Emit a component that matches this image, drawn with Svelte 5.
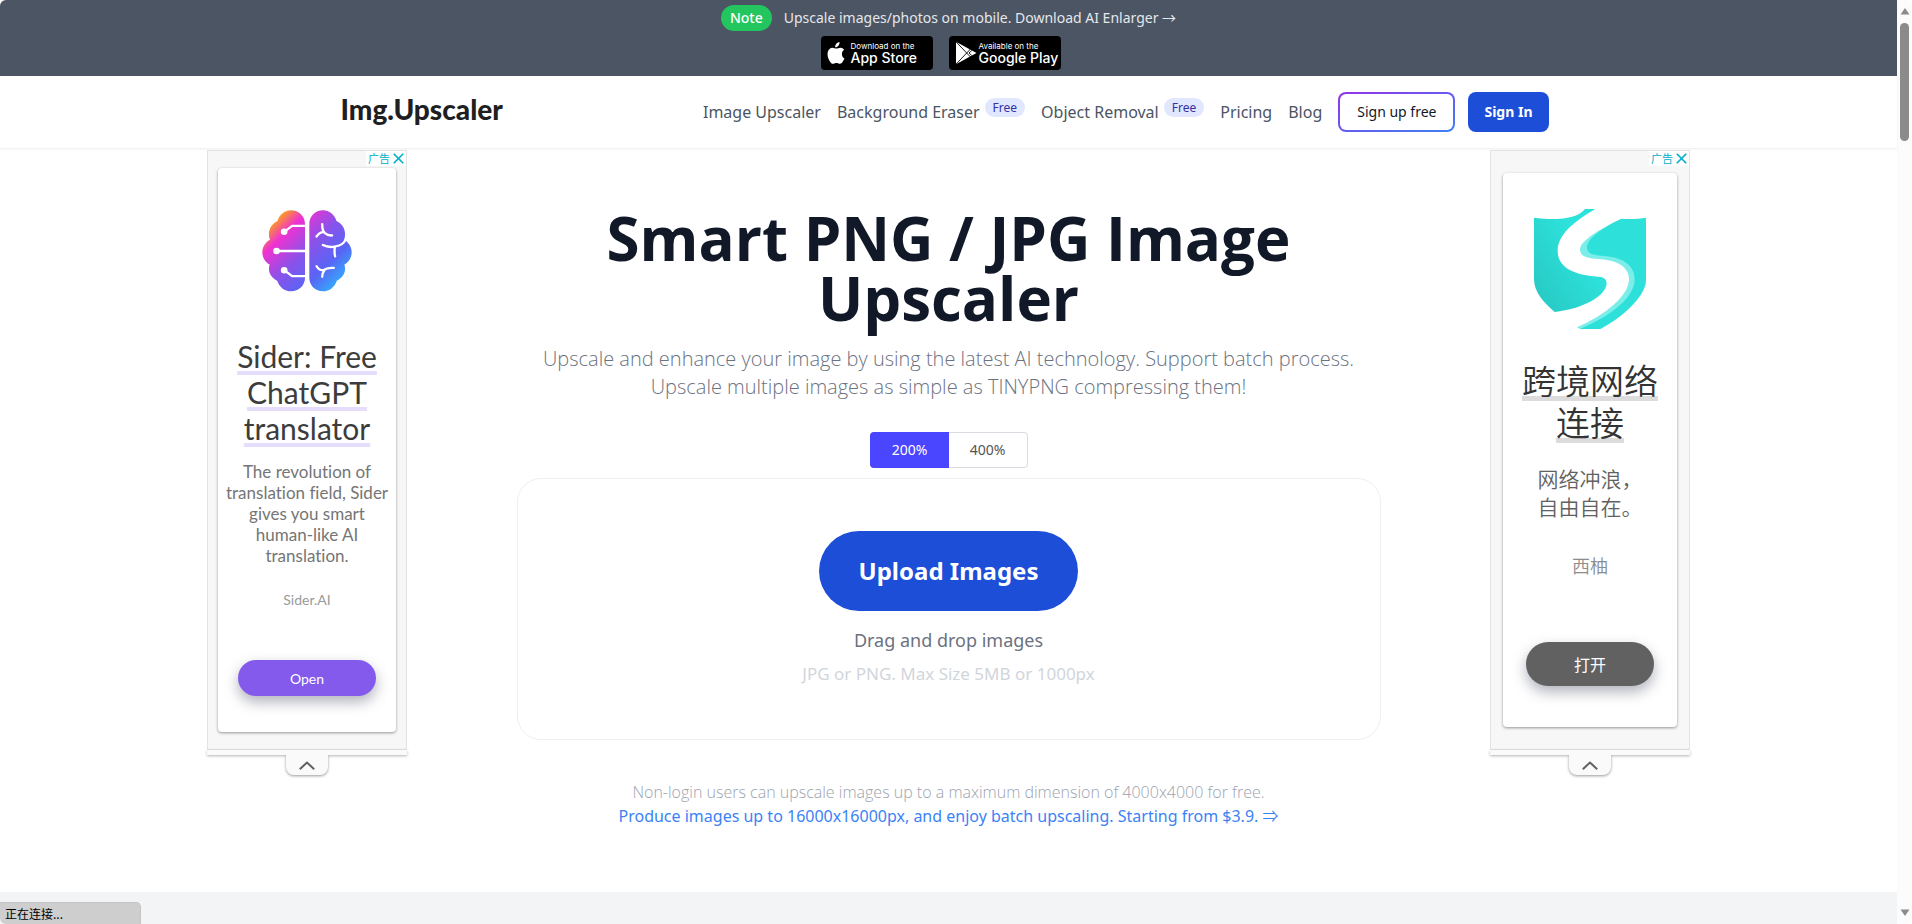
<script>
  let scale = $state('200%');
  const scales = ['200%', '400%'];
  const links = [
    { label: 'Image Upscaler' },
    { label: 'Background Eraser', tag: 'Free' },
    { label: 'Object Removal', tag: 'Free' },
    { label: 'Pricing' },
    { label: 'Blog' }
  ];
</script>

{#snippet adChoices()}
  <div class="choices">
    <a href="#ad">广告</a>
    <button aria-label="Close ad">
      <svg viewBox="0 0 10 10" width="11" height="11"><path d="M.7.7l8.600 8.600M9.300.7L.7 9.300" stroke="#00aecd" stroke-width="1.5" /></svg>
    </button>
  </div>
{/snippet}

{#snippet adTail()}
  <div class="tail"></div>
  <button class="tab" aria-label="Collapse ad">
    <svg viewBox="0 0 16 9" width="16" height="9"><path d="M.8 8.200L8 1.500l7.200 6.700" fill="none" stroke="#616161" stroke-width="2" /></svg>
  </button>
{/snippet}

<div class="window">
  <div class="page">
    <div class="banner">
      <p><span class="note">Note</span><a href="#app">Upscale images/photos on mobile. Download AI Enlarger →</a></p>
      <div class="stores">
        <a class="store" href="#ios">
          <svg viewBox="0 0 18 22" width="18" height="22" fill="#fff">
            <path d="M12.500 0c.2 1.600-.5 3-1.400 4C10.300 4.900 9.200 5.400 8.200 5.300 8 3.900 8.700 2.500 9.500 1.600 10.300.7 11.600.1 12.500 0z" />
            <path d="M17.500 16.500c-.5 1.200-1 2-1.700 3-.9 1.300-1.700 2.300-2.900 2.300-1.300 0-1.700-.8-3.500-.8s-2.200.8-3.500.8c-1.100 0-2-1-3-2.400C.7 16.400.1 12.600.8 10c.6-2.500 2.500-4.300 4.700-4.300 1.500 0 2.500.9 3.900.9 1.300 0 2.100-.9 4-.9 1.400 0 2.900.8 3.800 2-3.300 2-2.900 6.900.3 8.800z" />
          </svg>
          <span><small>Download on the</small><b>App Store</b></span>
        </a>
        <a class="store" href="#android">
          <svg viewBox="0 0 22 24" width="22" height="24">
            <path d="M1 .8L21.500 12 1 23.200z" fill="#fff" />
            <path d="M1 .8L15.500 16M1 23.200L15.500 8M16.800 9.500L14 12l2.800 2.500" fill="none" stroke="#000" stroke-width=".9" />
          </svg>
          <span><small>Available on the</small><b>Google Play</b></span>
        </a>
      </div>
    </div>

    <header>
      <div class="bar">
        <a class="logo" href="#home">Img.Upscaler</a>
        <nav>
          {#each links as link}
            <a href="#{link.label}">{link.label}{#if link.tag}<span class="tag">{link.tag}</span>{/if}</a>
          {/each}
          <button class="signup">Sign up free</button>
          <button class="signin">Sign In</button>
        </nav>
      </div>
    </header>

    <div class="body">
      <aside class="sider">
        <div class="ad">
          {@render adChoices()}
          <div class="card">
            <svg class="brain" viewBox="215 210 272 246" width="90" height="82">
              <defs>
                <linearGradient id="mind" gradientUnits="userSpaceOnUse" x1="240" y1="225" x2="450" y2="440">
                  <stop offset=".05" stop-color="#ffa80a" />
                  <stop offset=".23" stop-color="#f032d0" />
                  <stop offset=".5" stop-color="#8a52ea" />
                  <stop offset=".76" stop-color="#5865f5" />
                  <stop offset="1" stop-color="#2fb4ff" />
                </linearGradient>
              </defs>
              <g fill="url(#mind)">
                <path d="M345 252C345 228 326 210 303 210C283 210 268 223 262 242C246 249 236 264 236 282C236 288 237 294 239 299C225 307 216 321 216 337C216 353 225 367 238 374C237 378 236 382 236 387C236 403 246 416 261 423C267 442 283 455 303 455C326 455 345 437 345 414Z" />
                <path d="M358 252C358 228 376 210 399 210C419 210 434 223 440 242C456 249 466 264 466 282C466 288 465 294 463 299C477 307 486 321 486 337C486 353 477 367 464 374C465 378 466 382 466 387C466 403 456 416 441 423C435 442 419 455 399 455C376 455 358 437 358 414Z" />
              </g>
              <g fill="none" stroke="#fff" stroke-width="7" stroke-linecap="round">
                <path d="M282 275l24-18h42M259 333h89M282 391l24 18h42" />
                <path d="M397 252q0 20 8 27 9 8 22 7M380 289q10-15 23-13M399 315q15 8 35 5 26-3 34-22M435 322q-2 14 1 27M380 379q8 14 22 12 8-8 30-7M404 391q-7 8-7 20" />
              </g>
              <g fill="#fff"><circle cx="282" cy="275" r="10" /><circle cx="259" cy="333" r="10" /><circle cx="282" cy="391" r="10" /></g>
            </svg>
            <h2><a href="#sider">Sider: Free ChatGPT translator</a></h2>
            <p class="copy">The revolution of translation field, Sider gives you smart human-like AI translation.</p>
            <p class="brand">Sider.AI</p>
            <button class="cta">Open</button>
          </div>
        </div>
        {@render adTail()}
      </aside>

      <main>
        <h1>Smart PNG / JPG Image Upscaler</h1>
        <p class="lead">Upscale and enhance your image by using the latest AI technology. Support batch process. Upscale multiple images as simple as TINYPNG compressing them!</p>
        <div class="scales" role="group" aria-label="Scale">
          {#each scales as s}
            <button class:on={scale === s} aria-pressed={scale === s} onclick={() => (scale = s)}>{s}</button>
          {/each}
        </div>
        <section class="drop">
          <button class="upload">Upload Images</button>
          <p class="drag">Drag and drop images</p>
          <p class="limit">JPG or PNG. Max Size 5MB or 1000px</p>
        </section>
        <p class="free">Non-login users can upscale images up to a maximum dimension of 4000x4000 for free.</p>
        <a class="pro" href="#pricing">Produce images up to 16000x16000px, and enjoy batch upscaling. Starting from $3.9. ⇒</a>
      </main>

      <aside class="xiyou">
        <div class="ad">
          {@render adChoices()}
          <div class="card">
            <svg class="shield" viewBox="192 207 336 360" width="112" height="120">
              <defs>
                <linearGradient id="teal" x1="0" y1="1" x2=".7" y2=".4">
                  <stop offset="0" stop-color="#28c6c2" />
                  <stop offset="1" stop-color="#2de2db" />
                </linearGradient>
              </defs>
              <path fill="url(#teal)" d="M192 233C250 241 320 240 345 207H376C310 245 263 285 263 333C263 375 300 405 385 410C402 411 410 418 410 430C408 468 340 507 254 516C220 488 192 455 192 418Z" />
              <path fill="#7beee9" d="M454 236C400 262 330 300 330 328C330 350 350 354 385 357C440 360 477 380 477 418C477 470 400 528 321 562L330 567H350C440 530 510 480 510 410C505 360 450 345 400 340L380 300Z" />
              <path fill="#2de0da" d="M454 236C480 238 505 237 528 233V420C528 465 465 528 391 567H330C430 525 494 470 494 418C494 370 450 350 395 347C365 345 351 340 351 322C351 295 400 262 454 236Z" />
            </svg>
            <h2><a href="#xiyou">跨境网络连接</a></h2>
            <p class="copy">网络冲浪，自由自在。</p>
            <p class="brand">西柚</p>
            <button class="cta">打开</button>
          </div>
        </div>
        {@render adTail()}
      </aside>
    </div>
    <footer></footer>
  </div>

  <div class="scrollbar" aria-hidden="true">
    <svg viewBox="0 0 10 8" width="10" height="8"><path d="M5 1l4.500 6.500H.5z" fill="#8b8b8b" /></svg>
    <i></i>
    <svg viewBox="0 0 10 8" width="10" height="8"><path d="M5 7L.5.5h9z" fill="#8b8b8b" /></svg>
  </div>
</div>
<div class="status">正在连接...</div>

<style>
  :global(body) { margin: 0; background: #fff; }
  :global(*) { box-sizing: border-box; }
  p, h1, h2 { margin: 0; font-weight: 400; }
  a { color: inherit; text-decoration: none; }
  button { font: inherit; border: 0; padding: 0; background: none; cursor: pointer; }
  svg { display: block; flex: none; }

  .window {
    display: flex;
    min-height: 100vh;
    font-family: "Noto Sans", "Noto Sans CJK SC", sans-serif;
    color: #4b5563;
  }
  .page { flex: 1; min-width: 0; display: flex; flex-direction: column; }

  .banner {
    height: 76px;
    padding-top: 5px;
    background: #4b5563;
    border-top-left-radius: 6px;
    display: flex;
    flex-direction: column;
    align-items: center;
    gap: 5px;
  }
  .banner p { display: flex; align-items: center; gap: 12px; font-size: 14px; line-height: 26px; color: #e5e7eb; }
  .note { padding: 0 9px; border-radius: 13px; background: #22c55e; color: #fff; font-weight: 500; }
  .stores { display: flex; gap: 16px; padding-right: 16px; }
  .store {
    width: 112px;
    height: 34px;
    padding-left: 6px;
    border-radius: 4px;
    background: #000;
    color: #fff;
    display: flex;
    align-items: center;
    gap: 6px;
    font-family: Inter, sans-serif;
  }
  .store + .store { gap: 2px; }
  .store small { display: block; font-size: 8px; line-height: 9px; white-space: nowrap; }
  .store b { display: block; font-size: 14px; line-height: 14px; font-weight: 500; white-space: nowrap; }

  header { height: 72px; background: #fff; box-shadow: 0 1px 2px rgba(0, 0, 0, .08); position: relative; }
  .bar {
    max-width: 1280px;
    height: 100%;
    margin: 0 auto;
    padding: 0 40px 0 32px;
    display: flex;
    align-items: center;
    justify-content: space-between;
  }
  .logo { font-family: Lato, sans-serif; font-weight: 900; font-size: 28px; line-height: 32px; padding-bottom: 6px; color: #1f1f1f; }
  nav { display: flex; align-items: center; gap: 16px; font-size: 16px; line-height: 24px; white-space: nowrap; }
  nav a { display: flex; }
  .tag {
    height: 19px;
    margin: -2px 0 0 5px;
    padding: 0 8px;
    border-radius: 10px;
    background: #e0e7ff;
    color: #3730a3;
    font-size: 12px;
    line-height: 19px;
  }
  .signup, .signin { height: 40px; border-radius: 8px; font-size: 14px; }
  .signup {
    padding: 0 17px;
    border: 2px solid transparent;
    background: linear-gradient(#fff, #fff) padding-box, linear-gradient(to bottom right, #9333ea, #3b82f6) border-box;
    color: #111827;
  }
  .signin { margin-left: -3px; padding: 0 16px; background: #1d4ed8; color: #fff; font-weight: 700; }

  .body {
    width: 100%;
    max-width: 1483px;
    margin: 2px auto 0;
    display: flex;
    justify-content: space-between;
    align-items: flex-start;
  }
  aside { width: 200px; flex: none; display: flex; flex-direction: column; align-items: center; }
  .ad {
    width: 100%;
    height: 600px;
    border: 1px solid #e3e3e3;
    background: #f7f7f7;
    display: flex;
    flex-direction: column;
    align-items: center;
  }
  .choices {
    align-self: flex-end;
    height: 15px;
    padding: 0 2px;
    background: #fff;
    display: flex;
    align-items: center;
    gap: 3px;
    color: #00aecd;
    font-size: 11px;
    line-height: 15px;
  }
  .card {
    width: 178px;
    margin-top: 2px;
    border-radius: 4px;
    background: #fff;
    box-shadow: 0 1px 3px rgba(0, 0, 0, .4);
    display: flex;
    flex-direction: column;
    align-items: center;
    text-align: center;
  }
  .card h2 a { text-decoration: underline; text-decoration-skip-ink: none; }
  .tail { width: 100%; height: 5px; background: #fafafa; box-shadow: 0 1px 3px rgba(0, 0, 0, .3); }
  .tab {
    width: 42px;
    height: 20px;
    border-radius: 0 0 8px 8px;
    background: #fafafa;
    box-shadow: 0 1px 3px rgba(0, 0, 0, .4);
    clip-path: inset(0 -4px -4px -4px);
    display: grid;
    place-items: center;
  }
  .cta { border-radius: 22px; color: #fff; box-shadow: 0 6px 14px rgba(60, 64, 90, .4); }

  .sider .card { height: 564px; padding-top: 42px; font-family: Lato, sans-serif; font-variant-ligatures: none; }
  .sider h2 { margin-top: 46px; padding: 0 12px; font-size: 30px; line-height: 36px; color: #3c3c3c; }
  .sider h2 a { text-decoration-color: #e6dcfb; text-decoration-thickness: 4px; text-underline-offset: 3px; }
  .sider .copy { margin-top: 15px; padding: 0 5px; font-size: 17px; line-height: 21px; color: #757575; }
  .sider .brand { margin-top: 24px; font-size: 14px; line-height: 20px; color: #9a9a9a; }
  .sider .cta { width: 138px; height: 36px; margin-top: 50px; background: #835aeb; font-size: 14px; }

  .xiyou { font-family: "Noto Sans CJK SC", sans-serif; }
  .xiyou .card { width: 174px; height: 554px; margin-top: 7px; padding-top: 36px; }
  .xiyou h2 { margin-top: 30px; padding: 0 18px; font-size: 34px; line-height: 42px; font-weight: 350; color: #333; }
  .xiyou h2 a { text-decoration-color: #dcdcdc; text-decoration-thickness: 5px; text-underline-offset: 2px; }
  .xiyou .copy { margin-top: 21px; padding: 0 34px; font-size: 21px; line-height: 28px; font-weight: 350; color: #616161; }
  .xiyou .brand { margin-top: 31px; font-size: 18px; line-height: 28px; font-weight: 350; color: #8c8c8c; }
  .xiyou .cta { width: 128px; height: 44px; margin-top: 63px; background: #616161; font-size: 16px; }

  main { width: 864px; padding-top: 58px; display: flex; flex-direction: column; align-items: center; text-align: center; }
  h1 { max-width: 768px; font-family: "Open Sans", sans-serif; font-size: 60px; line-height: 60px; font-weight: 700; color: #111827; }
  .lead { margin-top: 17px; font-family: "Open Sans", sans-serif; font-size: 20px; line-height: 28px; font-weight: 300; color: #6b7280; }
  .scales { display: flex; margin-top: 31px; font-size: 14px; line-height: 34px; }
  .scales button { width: 79px; border: 1px solid #d9dce3; color: #555; }
  .scales button:first-child { border-radius: 4px 0 0 4px; border-right: 0; }
  .scales button:last-child { border-radius: 0 4px 4px 0; border-left: 0; }
  .scales .on { background: #4a45ff; border-color: #4a45ff; color: #fff; }
  .drop {
    width: 100%;
    height: 262px;
    margin-top: 10px;
    padding-top: 52px;
    border: 1px solid #eeeff1;
    border-radius: 24px;
    display: flex;
    flex-direction: column;
    align-items: center;
  }
  .upload { padding: 0 40px; border-radius: 40px; background: #1d4ed8; color: #fff; font-size: 24px; line-height: 80px; font-weight: 700; }
  .drag { margin-top: 15px; font-size: 18px; line-height: 28px; color: #6b7280; }
  .limit { margin-top: 8px; font-size: 17px; line-height: 24px; color: #d1d5db; }
  .free { margin-top: 40px; font-family: "Open Sans", sans-serif; font-size: 16px; line-height: 24px; font-weight: 300; color: #9ca3af; }
  .pro { font-size: 16px; line-height: 24px; color: #3b82f6; }
  footer { flex: 1; margin-top: 64px; background: #f3f4f6; }

  .scrollbar { width: 15px; padding: 7px 0; background: #fcfcfc; display: flex; flex-direction: column; align-items: center; border-radius: 0 8px 8px 0; }
  .scrollbar i { width: 9px; height: 118px; margin: 8px 0 auto; border-radius: 5px; background: #8b8b8b; }
  .status {
    position: fixed;
    left: 0;
    bottom: 0;
    width: 141px;
    height: 22px;
    padding-left: 5px;
    border: 1px solid #c4c4c4;
    border-width: 1px 1px 0 0;
    border-radius: 0 5px 0 6px;
    background: #cecece;
    color: #000;
    font: 12px/21px "Noto Sans CJK SC", sans-serif;
  }
</style>
